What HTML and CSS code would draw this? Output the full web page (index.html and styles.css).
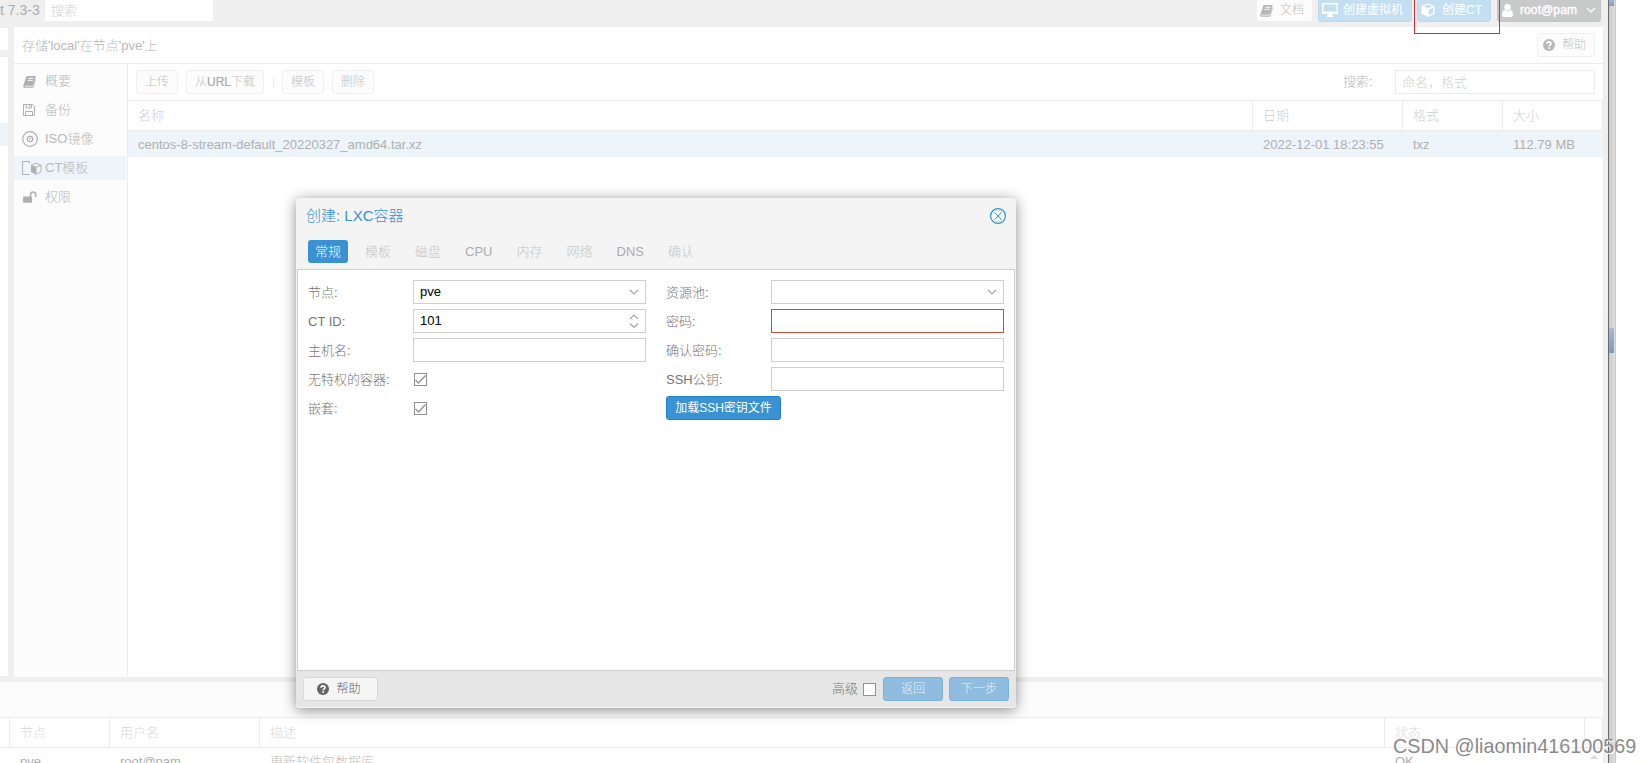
FILE: index.html
```
<!DOCTYPE html>
<html lang="zh-CN">
<head>
    <meta charset="UTF-8">
    <meta name="viewport" content="width=device-width, initial-scale=1.0">
    <title>创建: LXC容器</title>
    <link rel="stylesheet" href="styles.css">
</head>
<body>
    <svg class="defs" width="0" height="0">
        <symbol id="book" viewBox="0 0 14 14">
            <path d="M5 1h7.600c.9 0 1.300.5 1 1.400L11.200 10.600c-.2.700-.6 1-1.300 1H2.400c-.500 0-.7.500-.3.900h8.200c.4 0 .7-.2.800-.6l2.400-7.900.4.700-2.200 7.800c-.2.800-.8 1.300-1.600 1.300H2C.6 13.800 0 12.700.3 11.500L3.300 2.300C3.600 1.400 4.100 1 5 1z"/>
            <path d="M5.600 3.600h5.600M4.900 5.800h5.600" class="line"/>
        </symbol>
        <symbol id="question" viewBox="0 0 12 12">
            <circle cx="6" cy="6" r="6"/>
            <path d="M4 4.700C4 2.300 8.100 2.300 8.100 4.600C8.100 6 6.200 6 6.200 7.200" fill="none" stroke="#fff" stroke-width="1.600"/>
            <rect x="5.300" y="8.200" width="1.700" height="1.600" fill="#fff"/>
        </symbol>
        <symbol id="cube" viewBox="0 0 14 14">
            <path d="M7 .3L13.500 3v7.700L7 13.900.5 10.700V3z"/>
            <path d="M7 1.800L11.300 3.500 7 5.200 2.700 3.500zM7.700 6.500l4.500-1.800v5.200l-4.500 2.200z" class="cut"/>
        </symbol>
        <symbol id="down" viewBox="0 0 10 6">
            <path d="M1 1l4 4 4-4" fill="none" stroke="currentColor" stroke-width="1.200"/>
        </symbol>
        <symbol id="check" viewBox="0 0 11 11">
            <path d="M.5 6l3 3L10.500 1.500" fill="none" stroke="currentColor" stroke-width="1.300"/>
        </symbol>
    </svg>

    <div class="viewport">
        <header class="topbar">
            <span class="version">t 7.3-3</span>
            <div class="global-search">搜索</div>
            <div class="top-buttons">
                <div class="btn docs"><svg width="13" height="13"><use href="#book"/></svg>文档</div>
                <div class="btn blue vm">
                    <svg width="16" height="14" viewBox="0 0 16 14"><path d="M1 0h14q1 0 1 1v9q0 1-1 1h-5l1 2v1H5v-1l1-2H1q-1 0-1-1V1q0-1 1-1zm.500 1.500v7h13v-7z" fill-rule="evenodd"/></svg>创建虚拟机
                </div>
                <div class="btn blue ct"><svg width="14" height="14"><use href="#cube"/></svg>创建CT</div>
                <div class="btn user">
                    <svg width="11" height="13" viewBox="0 0 11 13"><circle cx="5.500" cy="3.300" r="3.200"/><path d="M2.500 6c2 1.300 4 1.300 6 0 2 .300 2.500 2.500 2.500 5 0 1-.8 2-1.800 2H1.800C.8 13 0 12 0 11c0-2.500.5-4.700 2.500-5z"/></svg>
                    <span>root@pam</span>
                    <svg width="10" height="6"><use href="#down"/></svg>
                </div>
            </div>
        </header>

        <main class="middle">
            <aside class="tree">
                <div class="tree-select"></div>
                <div class="tree-body"><div class="tree-selected"></div></div>
            </aside>
            <section class="storage">
                <div class="panel-title">
                    <span>存储'local'在节点'pve'上</span>
                    <div class="btn help"><svg width="12" height="12"><use href="#question"/></svg>帮助</div>
                </div>
                <div class="panel-body">
                    <nav class="side-menu">
                        <div class="item"><svg width="13" height="13"><use href="#book"/></svg>概要</div>
                        <div class="item">
                            <svg width="12" height="12" viewBox="0 0 12 12" fill="none" stroke="currentColor"><path d="M.500.500h9l2 2v9H.500zM3 .500v3.500h5.500V.500M2.500 11.500v-4h7v4M6.500 1v2"/></svg>备份
                        </div>
                        <div class="item">
                            <svg width="16" height="16" viewBox="0 0 16 16" fill="none" stroke="currentColor"><circle cx="8" cy="8" r="7.300" stroke-width="1.200"/><circle cx="8" cy="8" r="2.700" stroke-width="1.200"/><circle cx="8" cy="8" r=".5"/></svg>ISO镜像
                        </div>
                        <div class="item selected">
                            <svg width="20" height="14" viewBox="0 0 20 14"><path d="M7.500 2.500v-2H.500v13h7" fill="none" stroke="currentColor"/><path d="M9 4.200l5 2v7.300l-5-2.500z"/><path d="M9 4.200l5-2 5 2v6.500l-5 2.800V6.200zm5 2l5-2" fill="none" stroke="currentColor" stroke-width=".9"/></svg>CT模板
                        </div>
                        <div class="item">
                            <svg width="14" height="12" viewBox="0 0 14 12"><path d="M1 5.500h8v5.500q0 .8-.8.8H.800Q0 11.800 0 11V6.300q0-.8.8-.8z"/><path d="M7.500 6V3.500a2.600 2.600 0 0 1 5.200 0V6" fill="none" stroke="currentColor" stroke-width="1.500"/></svg>权限
                        </div>
                    </nav>
                    <div class="content">
                        <div class="toolbar">
                            <div class="btn">上传</div>
                            <div class="btn">从<span class="latin">URL</span>下载</div>
                            <div class="separator"></div>
                            <div class="btn">模板</div>
                            <div class="btn">删除</div>
                            <span class="search-label">搜索:</span>
                            <div class="search-box">命名，格式</div>
                        </div>
                        <div class="grid grid-header">
                            <div>名称</div><div>日期</div><div>格式</div><div>大小</div>
                        </div>
                        <div class="grid grid-row">
                            <div>centos-8-stream-default_20220327_amd64.tar.xz</div>
                            <div>2022-12-01 18:23:55</div>
                            <div>txz</div>
                            <div>112.79 MB</div>
                        </div>
                    </div>
                </div>
            </section>
        </main>

        <section class="log">
            <div class="log-bar"></div>
            <div class="log-grid log-header">
                <div class="blank"></div><div>节点</div><div>用户名</div><div>描述</div><div>状态</div><div></div>
            </div>
            <div class="log-grid log-row">
                <div class="blank"></div><div>pve</div><div>root@pam</div><div class="desc">更新软件包数据库</div><div>OK</div><div class="scroll-up"></div>
            </div>
        </section>
    </div>

    <div class="browser-scroll">
        <div class="thumb top"></div>
        <div class="thumb"></div>
    </div>

    <div class="dialog">
        <div class="dialog-title">
            <span>创建: LXC容器</span>
            <svg width="16" height="16" viewBox="0 0 16 16" fill="none" stroke="currentColor"><circle cx="8" cy="8" r="7.400" stroke-width="1.200"/><path d="M4.500 4.500l7 7M11.500 4.500l-7 7"/></svg>
        </div>
        <div class="tabs">
            <div class="tab active">常规</div>
            <div class="tab">模板</div>
            <div class="tab">磁盘</div>
            <div class="tab latin">CPU</div>
            <div class="tab">内存</div>
            <div class="tab">网络</div>
            <div class="tab latin">DNS</div>
            <div class="tab">确认</div>
        </div>
        <div class="dialog-body">
            <div class="column">
                <div class="field"><label>节点:</label><div class="input">pve<svg width="10" height="6"><use href="#down"/></svg></div></div>
                <div class="field">
                    <label>CT ID:</label>
                    <div class="input">101<svg width="10" height="16" viewBox="0 0 10 16" fill="none" stroke="currentColor" stroke-width="1.200"><path d="M1 6l4-4 4 4M1 10.500l4 4 4-4"/></svg></div>
                </div>
                <div class="field"><label>主机名:</label><div class="input"></div></div>
                <div class="field"><label>无特权的容器:</label><div class="checkbox"><svg width="11" height="11"><use href="#check"/></svg></div></div>
                <div class="field"><label>嵌套:</label><div class="checkbox"><svg width="11" height="11"><use href="#check"/></svg></div></div>
            </div>
            <div class="column">
                <div class="field"><label>资源池:</label><div class="input"><svg width="10" height="6"><use href="#down"/></svg></div></div>
                <div class="field"><label>密码:</label><div class="input invalid"></div></div>
                <div class="field"><label>确认密码:</label><div class="input"></div></div>
                <div class="field"><label>SSH公钥:</label><div class="input"></div></div>
                <div class="field"><div class="btn-primary load-key">加载SSH密钥文件</div></div>
            </div>
        </div>
        <div class="dialog-footer">
            <div class="dialog-help"><svg width="12" height="12"><use href="#question"/></svg>帮助</div>
            <span class="advanced">高级</span>
            <div class="checkbox"></div>
            <div class="btn-primary disabled">返回</div>
            <div class="btn-primary disabled">下一步</div>
        </div>
    </div>

    <div class="highlight"></div>
    <div class="watermark">CSDN @liaomin416100569</div>
</body>
</html>
```
FILE: styles.css
```
* {
    box-sizing: border-box;
}
body {
    margin: 0;
    height: 763px;
    display: flex;
    overflow: hidden;
    position: relative;
    background-color: #fff;
    font-family: "Liberation Sans", "Noto Sans CJK SC", sans-serif;
    font-size: 13px;
    font-weight: 300;
    line-height: 18px;
    color: #b8b8b8;
}
svg {
    flex: none;
    display: block;
}
svg:not([fill]) {
    fill: currentColor;
}
.line {
    stroke: #fff;
}
.defs {
    position: absolute;
}
.viewport {
    width: 1608px;
    height: 763px;
    overflow: hidden;
    background-color: #efefef;
    display: flex;
    flex-direction: column;
    flex: none;
}

/* top bar */
.topbar {
    height: 27px;
    flex: none;
    display: flex;
    align-items: flex-start;
}
.version {
    width: 45px;
    font-size: 14px;
    line-height: 20px;
    white-space: nowrap;
    color: #acacac;
}
.global-search {
    width: 168px;
    height: 21px;
    padding-left: 6px;
    line-height: 21px;
    background-color: #fff;
    color: #d2d2d2;
}
.top-buttons {
    display: flex;
    margin: -2px 7px 0 auto;
}
.btn {
    height: 24px;
    display: flex;
    align-items: center;
    border: 1px solid #f0f0f0;
    border-radius: 3px;
    background-color: #fcfcfc;
    padding: 0 8px;
    font-size: 12px;
    white-space: nowrap;
    color: #c2c2c2;
}
.btn svg {
    color: #b8b8b8;
}
.docs {
    width: 57px;
    padding: 0 3px;
    gap: 7px;
    margin-right: 5px;
}
.blue {
    background-color: #c4dff2;
    border-color: #bad9f0;
    color: #fff;
    font-weight: 400;
}
.blue svg,
.user svg {
    color: #fff;
}
.vm {
    width: 94px;
    padding: 0 3px;
    gap: 5px;
    margin-right: 5px;
}
.ct {
    width: 74px;
    padding: 0 3px;
    gap: 7px;
    margin-right: 6px;
}
.cut {
    fill: #c4dff2;
}
.user {
    width: 104px;
    padding: 0 6px 0 4px;
    background-color: #c8c9c9;
    border-color: #c3c4c4;
    color: #fff;
    -webkit-text-stroke: 0.4px #fff;
}
.user span {
    width: 57px;
    margin: 0 9px 0 7px;
    letter-spacing: 0.1px;
}

/* middle */
.middle {
    height: 650px;
    flex: none;
    display: flex;
}
.tree {
    width: 14px;
    padding-right: 6px;
    flex: none;
}
.tree-select {
    height: 22px;
    background-color: #fff;
    margin-top: 1px;
}
.tree-body {
    height: 619px;
    margin-top: 7px;
    padding-top: 66px;
    background-color: #fff;
}
.tree-selected {
    height: 23px;
    background-color: #edf4fa;
}
.storage {
    width: 1589px;
    background-color: #fff;
    display: flex;
    flex-direction: column;
}
.panel-title {
    height: 37px;
    flex: none;
    padding: 0 8px;
    display: flex;
    align-items: center;
    justify-content: space-between;
    border-bottom: 1px solid #ececec;
}
.panel-title span {
    padding-top: 1px;
}
.help {
    width: 58px;
    padding: 0 5px;
    gap: 7px;
}
.panel-body {
    flex: 1;
    display: flex;
}
.side-menu {
    width: 114px;
    padding-top: 5px;
    background-color: #fcfcfc;
    border-right: 1px solid #ececec;
}
.item {
    height: 24px;
    margin-bottom: 5px;
    margin-right: 1px;
    padding-left: 31px;
    display: flex;
    align-items: center;
    white-space: nowrap;
}
.item svg {
    margin-left: -22px;
    margin-right: 9px;
    color: #b0b0b0;
}
.item svg[width="12"] {
    margin-right: 10px;
}
.item svg[width="14"] {
    margin-right: 8px;
}
.item svg[width="16"] {
    margin-left: -23px;
    margin-right: 7px;
}
.item svg[width="20"] {
    margin-left: -23px;
    margin-right: 3px;
}
.selected {
    background-color: #edf4fa;
}
.content {
    flex: 1;
}
.toolbar {
    height: 37px;
    padding: 0 8px;
    display: flex;
    align-items: center;
    border-bottom: 1px solid #ececec;
}
.toolbar .btn {
    margin-right: 8px;
}
.toolbar .latin {
    color: #aaa;
    -webkit-text-stroke: 0.2px #aaa;
}
.separator {
    width: 1px;
    height: 14px;
    margin: 0 8px 0 1px;
    background-color: #ececec;
}
.search-label {
    margin-left: auto;
    width: 52px;
}
.search-box {
    width: 200px;
    height: 24px;
    padding-left: 6px;
    line-height: 24px;
    border: 1px solid #ececec;
    color: #d2d2d2;
}
.grid {
    display: grid;
    grid-template-columns: 1125px 150px 100px 100px;
}
.grid div {
    padding-left: 10px;
}
.grid-header {
    height: 30px;
    line-height: 29px;
    border-bottom: 1px solid #ececec;
    color: #cfcfcf;
}
.grid-header div {
    border-right: 1px solid #ececec;
}
.grid-row {
    height: 26px;
    line-height: 27px;
    background-color: #edf4fa;
    color: #b0b0b0;
}

/* task log */
.log {
    width: 1603px;
    height: 81px;
    margin-top: 5px;
    background-color: #fff;
}
.log-bar {
    height: 36px;
    background-color: #fcfcfc;
    border-bottom: 1px solid #ececec;
}
.log-grid {
    display: grid;
    grid-template-columns: 10px 100px 150px 1125px 200px 18px;
}
.log-grid div {
    padding-left: 10px;
}
.log-grid .blank {
    padding: 0;
}
.log-header {
    height: 30px;
    line-height: 29px;
    border-bottom: 1px solid #ececec;
    color: #dadada;
}
.log-header div {
    border-right: 1px solid #ececec;
}
.log-row {
    line-height: 27px;
    color: #adadad;
}
.log-row .desc {
    color: #c0c0c0;
}
.log-grid .scroll-up {
    padding: 0;
    width: 8px;
    height: 4px;
    margin: 7px 0 0 5px;
    background-color: #d8d8d8;
    clip-path: polygon(50% 0, 100% 100%, 0 100%);
}

/* page scrollbar */
.browser-scroll {
    width: 8px;
    height: 763px;
    flex: none;
    border-left: 1px solid #6c6c6c;
    border-right: 1px solid #c8c8c8;
    background: linear-gradient(to right, #c8c8c8, #e0e0e0);
}
.thumb {
    width: 5px;
    height: 25px;
    margin-top: 322px;
    background: linear-gradient(160deg, #a5bcd5, #8198b5);
}
.thumb.top {
    height: 6px;
    margin-top: 0;
}

/* wizard dialog */
.dialog {
    position: absolute;
    left: 296px;
    top: 198px;
    width: 720px;
    height: 510px;
    display: flex;
    flex-direction: column;
    border-radius: 4px;
    background-color: #f4f4f4;
    box-shadow: 0 2px 14px rgba(0,0,0,0.45);
    color: #7b7b7b;
}
.dialog-title {
    height: 36px;
    padding: 0 10px;
    display: flex;
    align-items: center;
    justify-content: space-between;
    font-size: 15px;
    color: #3892d4;
}
.tabs {
    height: 35px;
    padding: 6px 12px 0;
    display: flex;
    gap: 10px;
}
.tab {
    height: 23px;
    padding: 0 7px;
    line-height: 23px;
    border-radius: 3px;
    color: #c6c6c6;
}
.tab.latin {
    color: #acacac;
}
.tab.active {
    background-color: #3892d4;
    color: #fff;
}
.dialog-body {
    height: 402px;
    margin: 0 1px;
    padding: 10px;
    display: flex;
    gap: 20px;
    background-color: #fff;
    border: 1px solid #cfcfcf;
}
.column {
    width: 338px;
    display: flex;
    flex-direction: column;
    gap: 5px;
}
.field {
    height: 24px;
    display: flex;
    align-items: center;
}
.field label {
    width: 105px;
    padding-top: 2px;
    color: #757575;
}
.input {
    width: 233px;
    height: 24px;
    padding: 0 6px;
    display: flex;
    align-items: center;
    line-height: 24px;
    border: 1px solid #cfcfcf;
    color: #000;
}
.input svg {
    margin-left: auto;
    color: #a5a5a5;
}
.input.invalid {
    border-color: #cf4c35;
}
.checkbox {
    width: 13px;
    height: 13px;
    margin-left: 1px;
    border: 1px solid #919191;
    background-color: #fff;
    color: #919191;
}
.btn-primary {
    width: 60px;
    height: 24px;
    line-height: 22px;
    text-align: center;
    font-size: 12px;
    border: 1px solid #2081c9;
    border-radius: 3px;
    background-color: #3892d4;
    color: #fff;
}
.load-key {
    width: 115px;
    font-weight: 400;
}
.dialog-footer {
    flex: 1;
    padding: 0 7px 1px;
    display: flex;
    align-items: center;
    border-bottom: 1px solid #f5f5f5;
    border-radius: 0 0 4px 4px;
    background-color: #e6e6e6;
}
.dialog-help {
    width: 75px;
    height: 24px;
    margin-right: auto;
    padding-right: 3px;
    display: flex;
    align-items: center;
    justify-content: center;
    gap: 7px;
    font-size: 12px;
    border: 1px solid #d8d8d8;
    border-radius: 3px;
    background-color: #f5f5f5;
    color: #666;
}
.advanced {
    padding-top: 1px;
}
.dialog-footer .checkbox {
    margin: 1px 1px 0 5px;
}
.dialog-footer .btn-primary {
    margin-left: 6px;
}
.dialog-footer .disabled {
    background-color: #8fbcdf;
    border-color: #7ab2dd;
    color: #eaf2f8;
}

/* annotation and watermark */
.highlight {
    position: absolute;
    left: 1414px;
    top: -2px;
    width: 86px;
    height: 36px;
    border: 1px solid #e5262b;
}
.watermark {
    position: absolute;
    left: 1393px;
    top: 734px;
    font-size: 19.8px;
    line-height: 24px;
    white-space: nowrap;
    color: #8a8a8a;
    text-shadow: 1px 1px 0 #fff;
}
```
